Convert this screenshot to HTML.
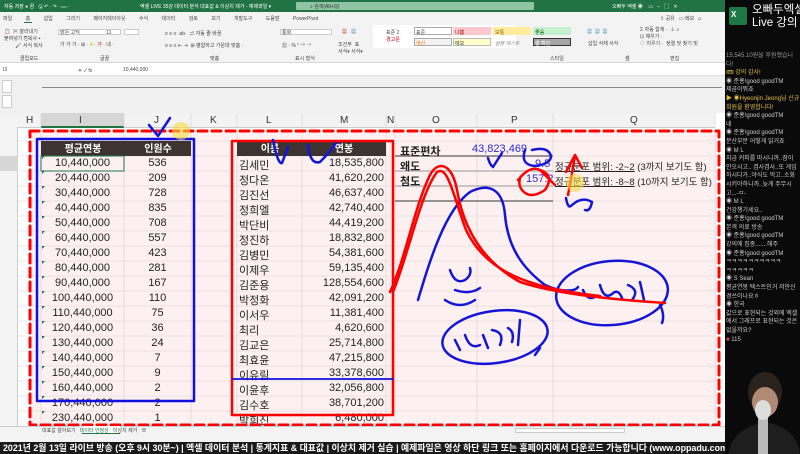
<!DOCTYPE html><html><head><meta charset="utf-8"><style>
*{margin:0;padding:0;box-sizing:border-box}
body{width:800px;height:454px;overflow:hidden;background:#fff;font-family:"Liberation Sans","Noto Sans CJK KR",sans-serif;position:relative}
.a{position:absolute;white-space:nowrap}
.t{font-size:5px;color:#444}
.c{font-size:11px;color:#222}
.chat{font-size:6px;color:#ccc;line-height:8.6px}
</style></head><body>
<div class="a" style="left:0;top:0;width:725px;height:12px;background:#217346"></div>
<div class="a t" style="left:4px;top:3px;color:#fff">자동 저장 ● 끔 &nbsp; 🖫 ↶ · ↷ · ▭ ·</div>
<div class="a t" style="left:140px;top:3px;color:#fff">엑셀 LIVE 35강 데이터 분석 대표값 &amp; 이상치 제거 - 예제파일 ▾</div>
<div class="a" style="left:296px;top:2px;width:238px;height:8px;background:#8fc5a4;border-radius:1px"></div>
<div class="a t" style="left:310px;top:3px;color:#333">⌕ 검색(Alt+Q)</div>
<div class="a t" style="left:612px;top:3px;color:#fff">오빠두 엑셀 ◉ &nbsp;&nbsp; ▭ &nbsp; – &nbsp; ▢ &nbsp; ✕</div>
<div class="a" style="left:0;top:12px;width:725px;height:51px;background:#f3f3f3;border-bottom:1px solid #d6d6d6"></div>
<div class="a t" style="left:3px;top:15px;word-spacing:12px">파일 홈 삽입 그리기 페이지레이아웃 수식 데이터 검토 보기 개발도구 도움말 PowerPivot</div>
<div class="a" style="left:24px;top:22px;width:8px;height:1px;background:#217346"></div>
<div class="a t" style="left:4px;top:28px">📋 &nbsp;✂ 잘라내기<br>붙여넣기 ⎘복사 ▾<br>&nbsp;&nbsp;&nbsp;&nbsp;&nbsp;&nbsp;&nbsp;&nbsp;🖌 서식 복사</div>
<div class="a" style="left:58px;top:29px;width:63px;height:6px;background:#fff;border:1px solid #ccc"></div>
<div class="a" style="left:124px;top:29px;width:15px;height:6px;background:#fff;border:1px solid #ccc"></div>
<div class="a t" style="left:60px;top:29px">맑은 고딕 &nbsp;&nbsp;&nbsp;&nbsp;&nbsp;&nbsp;&nbsp;&nbsp;&nbsp;&nbsp;&nbsp;&nbsp;&nbsp;&nbsp;&nbsp;&nbsp;&nbsp;&nbsp;11</div>
<div class="a t" style="left:60px;top:41px">가 가 가 · ⊞ · <span style="color:#d8c000">A</span> · <span style="color:#d00">가</span> · 내 ·</div>
<div class="a t" style="left:165px;top:30px">≡ ≡ ≡ &nbsp;ab· &nbsp;⇌ 자동 줄 바꿈</div>
<div class="a t" style="left:165px;top:42px">≡ ≡ ≡ ⇤ ⇥ &nbsp;⊞ 병합하고 가운데 맞춤 ·</div>
<div class="a" style="left:280px;top:29px;width:52px;height:6px;background:#fff;border:1px solid #ccc"></div>
<div class="a t" style="left:282px;top:29px">통화</div>
<div class="a t" style="left:282px;top:42px">▦ · % ❜ ⁺⁰ ⁻⁰</div>
<div class="a t" style="left:342px;top:28px;color:#c00">▦ &nbsp;&nbsp;<span style="color:#27a">▦</span></div>
<div class="a t" style="left:338px;top:41px">조건부 &nbsp;표<br>서식▾ 서식▾</div>
<div class="a" style="left:373px;top:25px;width:143px;height:23px;background:#fff"></div>
<div class="a t" style="left:386px;top:29px">표준 2<br><span style="color:#d00">경고문</span></div>
<div class="a" style="left:414px;top:27px;width:38px;height:8px;background:#fff;border:1px solid #aaa"></div>
<div class="a" style="left:453px;top:27px;width:38px;height:8px;background:#ffc7ce"></div>
<div class="a" style="left:493px;top:27px;width:38px;height:8px;background:#ffeb9c"></div>
<div class="a" style="left:533px;top:27px;width:38px;height:8px;background:#c6efce"></div>
<div class="a" style="left:414px;top:38px;width:38px;height:8px;background:#f2f2f2;border:1px solid #aaa"></div>
<div class="a" style="left:453px;top:38px;width:38px;height:8px;background:#ffffcc;border:1px solid #bbb"></div>
<div class="a" style="left:533px;top:38px;width:38px;height:8px;background:#a5a5a5;border:1px solid #333"></div>
<div class="a t" style="left:416px;top:29px">표준</div><div class="a t" style="left:455px;top:29px;color:#9c0006">나쁨</div><div class="a t" style="left:495px;top:29px;color:#9c5700">보통</div><div class="a t" style="left:535px;top:29px;color:#006100">좋음</div>
<div class="a t" style="left:416px;top:40px;color:#fa7d00">계산</div><div class="a t" style="left:455px;top:40px">메모</div><div class="a t" style="left:495px;top:40px;color:#7f7f7f;font-style:italic">설명 텍스트</div><div class="a t" style="left:535px;top:40px;color:#fff">셀 확인</div>
<div class="a t" style="left:587px;top:28px;color:#27a">▦ &nbsp;▦ &nbsp;▦</div>
<div class="a t" style="left:588px;top:40px">삽입 삭제 서식</div>
<div class="a t" style="left:640px;top:26px">Σ 자동 합계 · &nbsp;⏚ ⌕<br>⊡ 채우기 ·<br><span style="color:#a3c">◇</span> 지우기 · &nbsp;정렬 및 찾기 및</div>
<div class="a t" style="left:550px;top:55px">스타일</div><div class="a t" style="left:100px;top:55px">글꼴</div><div class="a t" style="left:210px;top:55px">맞춤</div><div class="a t" style="left:20px;top:55px">클립보드</div><div class="a t" style="left:295px;top:55px">표시 형식</div><div class="a t" style="left:625px;top:55px">셀</div><div class="a t" style="left:670px;top:55px">편집</div>
<div class="a t" style="left:660px;top:15px">⇪ 공유 &nbsp; ▭ 메모 &nbsp;☺</div>
<div class="a" style="left:0;top:63px;width:725px;height:13px;background:#fff;border-bottom:1px solid #ddd"></div>
<div class="a t" style="left:3px;top:67px">I3</div>
<div class="a t" style="left:78px;top:67px">✕ ✓ fx</div>
<div class="a t" style="left:123px;top:67px">10,440,000</div>
<div class="a" style="left:0;top:76px;width:725px;height:37px;background:#f0f0f0"></div>
<div class="a" style="left:42px;top:87px;width:680px;height:1px;background:#888"></div>
<div class="a" style="left:2px;top:80px;width:10px;height:13px;border:1px solid #ccc;background:#fff"></div>
<div class="a" style="left:2px;top:95px;width:10px;height:13px;border:1px solid #ccc;background:#fff"></div>
<div class="a" style="left:0;top:113px;width:715px;height:15px;background:#f3f3f3;border-bottom:1px solid #ccc"></div>
<div class="a" style="left:41px;top:113px;width:83px;height:15px;background:#d6d6d6;border-bottom:2px solid #217346"></div>
<div id="cols"></div>
<div class="a" style="left:0;top:127px;width:18px;height:300px;background:#f3f3f3;border-right:1px solid #ccc"></div>
<div class="a" style="left:0;top:156px;width:18px;height:15px;background:#d6d6d6"></div>
<div class="a" style="left:30px;top:131px;width:690px;height:294px;background:#fdf0f0"></div>
<svg class="a" style="left:0;top:0" width="725" height="430">
<g stroke="#d8d0d0" stroke-width="0.6">
<line x1="18" y1="141" x2="715" y2="141"/><line x1="18" y1="156" x2="715" y2="156"/><line x1="18" y1="171" x2="715" y2="171"/><line x1="18" y1="186" x2="715" y2="186"/><line x1="18" y1="201" x2="715" y2="201"/><line x1="18" y1="216" x2="715" y2="216"/><line x1="18" y1="231" x2="715" y2="231"/><line x1="18" y1="246" x2="715" y2="246"/><line x1="18" y1="261" x2="715" y2="261"/><line x1="18" y1="276" x2="715" y2="276"/><line x1="18" y1="291" x2="715" y2="291"/><line x1="18" y1="306" x2="715" y2="306"/><line x1="18" y1="321" x2="715" y2="321"/><line x1="18" y1="336" x2="715" y2="336"/><line x1="18" y1="351" x2="715" y2="351"/><line x1="18" y1="366" x2="715" y2="366"/><line x1="18" y1="381" x2="715" y2="381"/><line x1="18" y1="396" x2="715" y2="396"/><line x1="18" y1="411" x2="715" y2="411"/>
<line x1="41" y1="113" x2="41" y2="426"/><line x1="124" y1="113" x2="124" y2="426"/><line x1="191" y1="113" x2="191" y2="426"/><line x1="237" y1="113" x2="237" y2="426"/><line x1="302" y1="113" x2="302" y2="426"/><line x1="386" y1="113" x2="386" y2="426"/><line x1="395" y1="113" x2="395" y2="426"/><line x1="477" y1="113" x2="477" y2="426"/><line x1="553" y1="113" x2="553" y2="426"/><line x1="715" y1="113" x2="715" y2="426"/>
</g>
<rect x="41" y="141" width="150" height="15" fill="#3d3431"/>
<rect x="237" y="141" width="149" height="15" fill="#3d3431"/>
<text x="83" y="152" font-size="10" fill="#fff" text-anchor="middle" font-weight="bold" font-family="Liberation Sans,Noto Sans CJK KR,sans-serif">평균연봉</text>
<text x="158" y="152" font-size="10" fill="#fff" text-anchor="middle" font-weight="bold" font-family="Liberation Sans,Noto Sans CJK KR,sans-serif">인원수</text>
<text x="270" y="152" font-size="10" fill="#fff" text-anchor="middle" font-weight="bold" font-family="Liberation Sans,Noto Sans CJK KR,sans-serif">이름</text>
<text x="344" y="152" font-size="10" fill="#fff" text-anchor="middle" font-weight="bold" font-family="Liberation Sans,Noto Sans CJK KR,sans-serif">연봉</text>
<rect x="41" y="156" width="83" height="15" fill="none" stroke="#217346" stroke-width="1"/>
<line x1="395" y1="156" x2="553" y2="156" stroke="#333"/><line x1="395" y1="171" x2="553" y2="171" stroke="#999"/><line x1="395" y1="186" x2="553" y2="186" stroke="#999"/><line x1="395" y1="201" x2="553" y2="201" stroke="#333"/>
</svg>
<div id="cells"></div>
<div class="a c" style="left:400px;top:143px;font-weight:bold">표준편차</div>
<div class="a c" style="left:400px;top:158px;font-weight:bold">왜도</div>
<div class="a c" style="left:400px;top:173px;font-weight:bold">첨도</div>
<div class="a c" style="left:472px;top:143px;color:#2a2ad0">43,823,469</div>
<div class="a c" style="left:535px;top:158px;color:#2a2ad0">9.5</div>
<div class="a c" style="left:526px;top:173px;color:#2a2ad0">157.2</div>
<div class="a" style="left:555px;top:159px;font-size:9.5px;color:#222"><u>정규분포 범위: -2~2</u> (3까지 보기도 함)</div>
<div class="a" style="left:555px;top:174px;font-size:9.5px;color:#222"><u>정규분포 범위: -8~8</u> (10까지 보기도 함)</div>
<svg class="a" style="left:0;top:0" width="725" height="430" fill="none" stroke-linecap="round" stroke-linejoin="round">
<rect x="30" y="131" width="689" height="294" stroke="#f00" stroke-width="3" stroke-dasharray="9,5"/>
<rect x="37" y="139" width="157" height="262" stroke="#1010e0" stroke-width="2.5"/>
<rect x="232" y="141" width="161" height="274" stroke="#f00" stroke-width="2.5"/>
<line x1="232" y1="379" x2="393" y2="379" stroke="#1010e0" stroke-width="1.8"/>
<g stroke="#1515d8" stroke-width="2.5">
<path d="M149 125 L158 136 L170 118"/>
<path d="M273 140 Q278 165 282 163 Q285 155 288 147"/>
<path d="M308 145 Q310 165 320 162 Q330 152 336 143"/>
<path d="M488 158 Q490 165 493 167 L502 153"/>
<path d="M525 150 Q520 165 535 166 Q551 164 551 156 Q548 146 532 150"/>
<path d="M418 300 C430 260, 445 210, 470 192 C490 182, 503 190, 505 215 C508 250, 525 270, 545 285 C560 292, 575 292, 578 287"/>
<path d="M566 198 Q568 210 572 205 Q582 196 592 202 Q590 212 585 210"/>
<ellipse cx="612" cy="293" rx="56" ry="32" transform="rotate(-5 612 293)"/>
<path d="M660 305 Q665 315 662 323"/>
<path d="M583 290 Q588 302 596 296 M600 285 Q604 300 612 294 Q618 288 622 298 M628 285 Q640 290 632 300 M640 282 L644 300"/>
<ellipse cx="495" cy="337" rx="53" ry="26" transform="rotate(-8 495 337)"/>
<path d="M535 355 L540 348"/>
<path d="M450 270 Q455 285 465 280 Q472 275 470 268 M455 290 Q470 295 480 288 M445 300 Q460 310 475 300"/>
<path d="M455 340 L460 350 M465 335 Q470 350 480 345 M483 335 L488 348 M492 330 Q505 332 500 345 M508 328 Q515 332 512 342 M520 320 L518 345"/>
</g>
<g stroke="#f00" stroke-width="2.5">
<path d="M390 292 C405 260, 415 205, 430 175 C438 160, 452 163, 457 190 C463 225, 480 260, 520 282 C560 295, 620 300, 665 303"/>
<path d="M393 292 C410 250, 420 195, 437 172 C448 165, 453 195, 466 230 C485 270, 525 288, 600 296"/>
<path d="M518 180 Q530 165 540 170 Q555 175 545 190 Q530 200 522 190 Q518 185 520 178"/>
<path d="M575 155 Q572 175 568 195 M575 155 L566 172 M575 155 L582 168"/>
<path d="M540 170 L555 185"/>
</g>
<circle cx="575" cy="183" r="9" fill="#f5dc40" fill-opacity="0.6"/>
<circle cx="181" cy="131" r="9" fill="#f5dc40" fill-opacity="0.6"/>
</svg>
<div class="a" style="left:0;top:426px;width:725px;height:16px;background:#f3f3f3;border-top:1px solid #ccc"></div>
<div class="a" style="left:82px;top:426px;width:38px;height:8px;background:#fff;border-bottom:1px solid #217346"></div>
<div class="a t" style="left:42px;top:427px">대표값 알아보기 &nbsp;&nbsp;<span style="color:#217346">데이터 안정성</span> &nbsp;&nbsp;이상치 제거 &nbsp;&nbsp;⊕</div>
<div class="a" style="left:515px;top:428px;width:110px;height:5px;background:#fff;border:1px solid #ccc"></div>
<div class="a" style="left:0;top:442px;width:725px;height:12px;background:#1a1a1a"></div>
<div class="a" style="left:3px;top:442px;font-size:8.9px;color:#fff;font-weight:bold;line-height:12px">2021년 2월 13일 라이브 방송 (오후 9시 30분~) | 엑셀 데이터 분석 | 통계지표 &amp; 대표값 | 이상치 제거 실습 | 예제파일은 영상 하단 링크 또는 홈페이지에서 다운로드 가능합니다 (www.oppadu.com)</div>
<div class="a" style="left:725px;top:0;width:75px;height:454px;background:#0a0a0a"></div>
<div class="a" style="left:729px;top:7px;width:18px;height:18px;background:#1d7a46;border-radius:2px"></div>
<div class="a" style="left:731px;top:10px;font-size:8px;color:#fff;font-weight:bold">X</div>
<div class="a" style="left:752px;top:4px;font-size:11.5px;color:#fff;line-height:13px">오빠두엑셀<br>Live 강의</div>
<div class="a chat" style="left:726px;top:52px;width:74px;white-space:normal;overflow:hidden;height:310px">
<span style="color:#999">15,545.10원을 후원했습니다!</span><br><span style="color:#e0c040">🎟 강의 감사!</span><br>◉ 준홍!good goodTM<br>제곱이뭐죠<br><span style="color:#e0c040">▶ ◉Hyeonjin Jeong님 신규 회원을 환영합니다!</span><br>◉ 준홍!good goodTM<br>네<br>◉ 준홍!good goodTM<br>분산부분 어떻게 읽거죠<br>◉ M L<br>지금 커피를 마시니까..잠이 안오시고.. 겸사겸사..또 게임하시다가..야식도 먹고..소화시키야하니까..늦게 주무시고...-ㅁ-<br>◉ M L<br>건강챙기세요..<br>◉ 준홍!good goodTM<br>본격 의료 방송<br>◉ 준홍!good goodTM<br>강의에 집중.......해주<br>◉ 준홍!good goodTM<br>ㅋㅋㅋㅋㅋㅋㅋㅋㅋㅋ<br>ㅋㅋㅋㅋㅋ<br>◉ S Sean<br>평균연봉 텍스트인거 저만신경쓰이나요ㅎ<br>◉ 한국<br>값으로 표현되는 것외에 엑셀에서 그래프로 표현되는 것은 없을까요?<br><span style="color:#c44">■</span> 115</div>
<svg class="a" style="left:725px;top:370px" width="75" height="84"><ellipse cx="40" cy="22" rx="17" ry="20" fill="#2a221c"/><ellipse cx="40" cy="32" rx="13" ry="15" fill="#b08a74"/><path d="M3 84 Q8 58 40 52 Q72 58 75 84Z" fill="#1e1e1e"/><rect x="33" y="40" width="10" height="44" fill="#bbb"/><ellipse cx="38" cy="40" rx="8" ry="10" fill="#ddd"/></svg>
<script>
var cols=[["H",30],["I",83],["J",158],["K",214],["L",270],["M",344],["N",391],["O",436],["P",515],["Q",634]];
var h="";cols.forEach(function(c){h+='<div class="a" style="left:'+(c[1]-4)+'px;top:115px;font-size:10px;color:#333">'+c[0]+'</div>'});
for(var r=1;r<=20;r++)h+='<div class="a" style="left:0;width:18px;text-align:center;top:'+(127+(r-1)*15)+'px;font-size:9.5px;color:#333">'+r+'</div>';
document.getElementById("cols").innerHTML=h;
var I=[536,209,728,835,708,557,423,281,167,110,75,36,24,7,9,2,2,1];
var N=["김세민","정다온","김진선","정희엘","박단비","정진하","김병민","이제우","김준용","박정화","이서우","최리","김교은","최효윤","이유림","이윤후","김수호","박희진"];
var M=["18,535,800","41,620,200","46,637,400","42,740,400","44,419,200","18,832,800","54,381,600","59,135,400","128,554,600","42,091,200","11,381,400","4,620,600","25,714,800","47,215,800","33,378,600","32,056,800","38,701,200","6,480,000"];
var s="";
for(var i=0;i<18;i++){var y=157+i*15;var ia=(i<17?(i+1)*10:230)+",440,000";
s+='<div class="a" style="left:42px;top:'+(y-1)+'px;width:0;height:0;border-top:3px solid #217346;border-right:3px solid transparent"></div>';
s+='<div class="a c" style="left:41px;width:83px;text-align:center;top:'+y+'px">'+ia+'</div>';
s+='<div class="a c" style="left:124px;width:67px;text-align:center;top:'+y+'px">'+I[i]+'</div>';
s+='<div class="a c" style="left:239px;top:'+y+'px">'+N[i]+'</div>';
s+='<div class="a c" style="left:302px;width:82px;text-align:right;top:'+y+'px">'+M[i]+'</div>';}
document.getElementById("cells").innerHTML=s;
</script>
</body></html>
